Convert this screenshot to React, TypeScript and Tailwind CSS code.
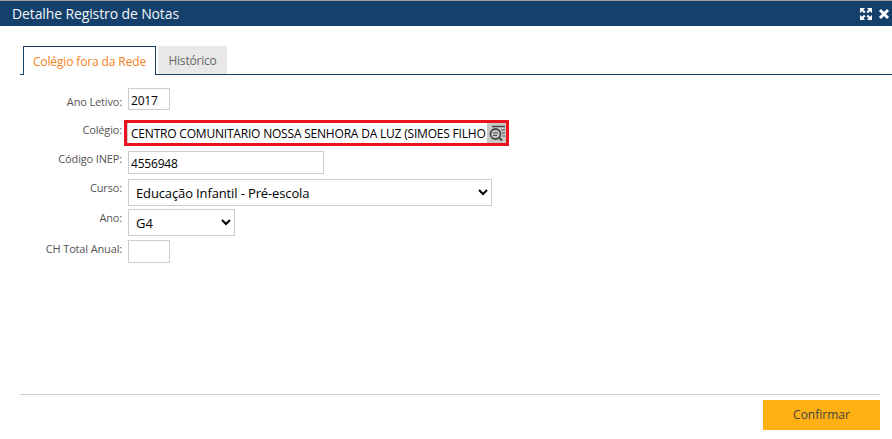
export default function App() {
  const label = "w-[122px] shrink-0 text-right text-[11px] leading-[16px] tracking-[-0.15px] text-[#555]";
  const field = "pt-[2px] text-[12px] tracking-[-0.2px] text-black outline-none";

  return (
    <div className="h-[439px] w-[892px] overflow-hidden bg-white font-['Open_Sans',sans-serif]">
      <div className="h-px bg-[#9a9a9a]" />
      <div className="flex h-[25px] items-center justify-between bg-[#14406b] pl-3 pr-[2px]">
        <span className="text-[14px] tracking-[-0.12px] text-[#f2f5f8]">Detalhe Registro de Notas</span>
        <div className="flex items-center gap-[5px]">
          <svg width="14" height="14" viewBox="0 0 14 14" fill="#fff">
            <path d="M1 1h5L4.500 2.800l2 2L5 6.300l-2-2L1 6zM13 1v5L11 4.300l-2 2L7.500 4.800l2-2L8 1zM1 13V8l2 1.700 2-2L6.500 9.200l-2 2L6 13zM13 13H8l1.500-1.800-2-2L9 7.700l2 2L13 8z" />
          </svg>
          <svg width="12" height="12" viewBox="0 0 12 12">
            <path d="M2 2l8 8M10 2l-8 8" stroke="#fff" strokeWidth="3" />
          </svg>
        </div>
      </div>

      <div className="pl-5 pt-5">
        <div className="flex h-[29px] border-b border-[#14406b] pl-[3px]">
          <div className="flex h-[29px] w-[133px] items-center justify-center border border-b-0 border-[#14406b] bg-white pt-[2px] text-[12px] tracking-[-0.13px] text-[#f58220]">
            Colégio fora da Rede
          </div>
          <div className="ml-[2px] flex h-[28px] w-[69px] items-center justify-center bg-[#e8e8e8] pt-[2px] text-[12px] tracking-[-0.2px] text-[#666]">
            Histórico
          </div>
        </div>
      </div>

      <div className="mt-[13px]">
        <div className="flex items-start">
          <div className={`${label} pt-[6px]`}>Ano Letivo:</div>
          <input readOnly value="2017" className={`ml-[6px] h-[22px] w-[42px] border border-[#ccc] px-[2px] ${field}`} />
        </div>

        <div className="mt-[10px] flex items-start">
          <div className={`${label} pt-[2px]`}>Colégio:</div>
          <div className="ml-[2px] flex h-[26px] w-[385px] border-[3px] border-[#e8131f]">
            <input readOnly value="CENTRO COMUNITARIO NOSSA SENHORA DA LUZ (SIMOES FILHO" className={`min-w-0 flex-1 border-l border-[#ccc] pl-[3px] ${field}`} />
            <div className="flex w-[19px] shrink-0 items-center justify-center bg-[#c8c8c8]">
              <svg width="18" height="18" viewBox="0 0 18 18" fill="none" stroke="#4a4a4a">
                <path d="M4 2.500h13" strokeWidth="1.500" />
                <circle cx="7.500" cy="10" r="5" strokeWidth="1.800" />
                <path d="M11 13.500l3 3" strokeWidth="2.200" />
                <path d="M5 9h5M5 11.500h4M13 6h4M14 9h3M14.500 12h2.500" strokeWidth="1.200" />
              </svg>
            </div>
          </div>
        </div>

        <div className="mt-[5px] flex items-start">
          <div className={`${label} pt-[0px]`}>Código INEP:</div>
          <input readOnly value="4556948" className={`ml-[6px] h-[23px] w-[196px] border border-[#ccc] px-[2px] ${field}`} />
        </div>

        <div className="mt-[5px] flex items-start">
          <div className={`${label} pt-[1px]`}>Curso:</div>
          <select defaultValue="infantil" className="ml-[6px] h-[27px] w-[364px] appearance-auto border border-[#ccc] bg-white pl-[3px] text-[13px] tracking-[-0.13px] text-black outline-none">
            <option value="infantil">Educação Infantil - Pré-escola</option>
          </select>
        </div>

        <div className="mt-[3px] flex items-start">
          <div className={`${label} pt-[1px]`}>Ano:</div>
          <select defaultValue="G4" className="ml-[6px] h-[27px] w-[107px] appearance-auto border border-[#ccc] bg-white pl-[3px] text-[13px] text-black outline-none">
            <option value="G4">G4</option>
          </select>
        </div>

        <div className="mt-[4px] flex items-start">
          <div className={`${label} pt-[1px]`}>CH Total Anual:</div>
          <input readOnly value="" className={`ml-[6px] h-[23px] w-[42px] border border-[#ccc] px-[2px] ${field}`} />
        </div>
      </div>

      <div className="mx-[12px] ml-5 mt-[131px] border-t border-[#ccc] pt-[5px]">
        <div className="flex justify-end">
          <button className="h-[30px] w-[117px] bg-[#ffb012] text-[12px] text-[#444]">Confirmar</button>
        </div>
      </div>
    </div>
  );
}
